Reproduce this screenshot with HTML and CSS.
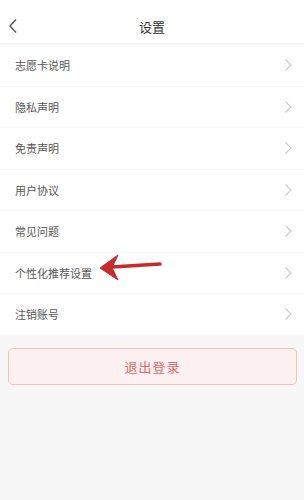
FILE: index.html
```html
<!DOCTYPE html>
<html lang="zh-CN">
<head>
    <meta charset="UTF-8">
    <meta name="viewport" content="width=device-width, initial-scale=1.0">
    <title>设置</title>
    <link rel="stylesheet" href="styles.css">
</head>
<body>
    <header class="top-bar">
        <span class="back">
            <svg width="10" height="16" viewBox="0 0 10 16"><path d="M8 1.5 L2 8 L8 14.5" fill="none" stroke="#555" stroke-width="1.4"/></svg>
        </span>
        <h1>设置</h1>
    </header>
    <main class="menu">
        <div class="menu-item"><span>志愿卡说明</span><i class="chev"></i></div>
        <div class="menu-item"><span>隐私声明</span><i class="chev"></i></div>
        <div class="menu-item"><span>免责声明</span><i class="chev"></i></div>
        <div class="menu-item"><span>用户协议</span><i class="chev"></i></div>
        <div class="menu-item"><span>常见问题</span><i class="chev"></i></div>
        <div class="menu-item"><span>个性化推荐设置</span><i class="chev"></i></div>
        <div class="menu-item"><span>注销账号</span><i class="chev"></i></div>
    </main>
    <div class="logout-wrap">
        <button class="logout">退出登录</button>
    </div>

    <!-- annotation arrow drawn over the list -->
    <svg class="pointer" width="66" height="30" viewBox="0 0 66 30">
        <path d="M62 12 L14 15" stroke="#c62a2b" stroke-width="3.6" stroke-linecap="round" fill="none"/>
        <path d="M2 16 L20 3 L14 15.5 L20 28 Z" fill="#c62a2b" stroke="#c62a2b" stroke-width="1" stroke-linejoin="round"/>
    </svg>
</body>
</html>
```

FILE: styles.css
```css
body {
    margin: 0;
    background-color: #f7f7f7;
    font-family: "Noto Sans CJK SC", "Noto Sans", sans-serif;
    position: relative;
    height: 500px;
    overflow: hidden;
}

.top-bar {
    height: 34px;
    padding-top: 9px;
    background: #fff;
    border-bottom: 1px solid #f0f0f0;
    display: flex;
    align-items: center;
    justify-content: center;
    position: relative;
}

.top-bar h1 {
    margin: 0;
    font-size: 13px;
    font-weight: normal;
    color: #333;
}

.back {
    position: absolute;
    left: 8px;
    top: 18px;
    line-height: 0;
}

.menu {
    margin-top: 1px;
}

.menu-item {
    height: 40.5px;
    margin-bottom: 1px;
    background: #fff;
    display: flex;
    align-items: center;
    justify-content: space-between;
    padding: 0 12px 0 15px;
    font-size: 11px;
    color: #555;
}

.chev {
    width: 7px;
    height: 7px;
    border-top: 1.2px solid #c4c4c4;
    border-right: 1.2px solid #c4c4c4;
    transform: rotate(45deg);
    margin-right: 2px;
}

.logout-wrap {
    padding: 12px 7px 0 8px;
}

.logout {
    width: 100%;
    height: 37px;
    background: #fdf0f0;
    border: 1px solid #f0c0c0;
    border-radius: 5px;
    color: #d96b6b;
    font-family: inherit;
    font-size: 13px;
    letter-spacing: 1px;
}

.pointer {
    position: absolute;
    left: 98px;
    top: 252px;
}
```
